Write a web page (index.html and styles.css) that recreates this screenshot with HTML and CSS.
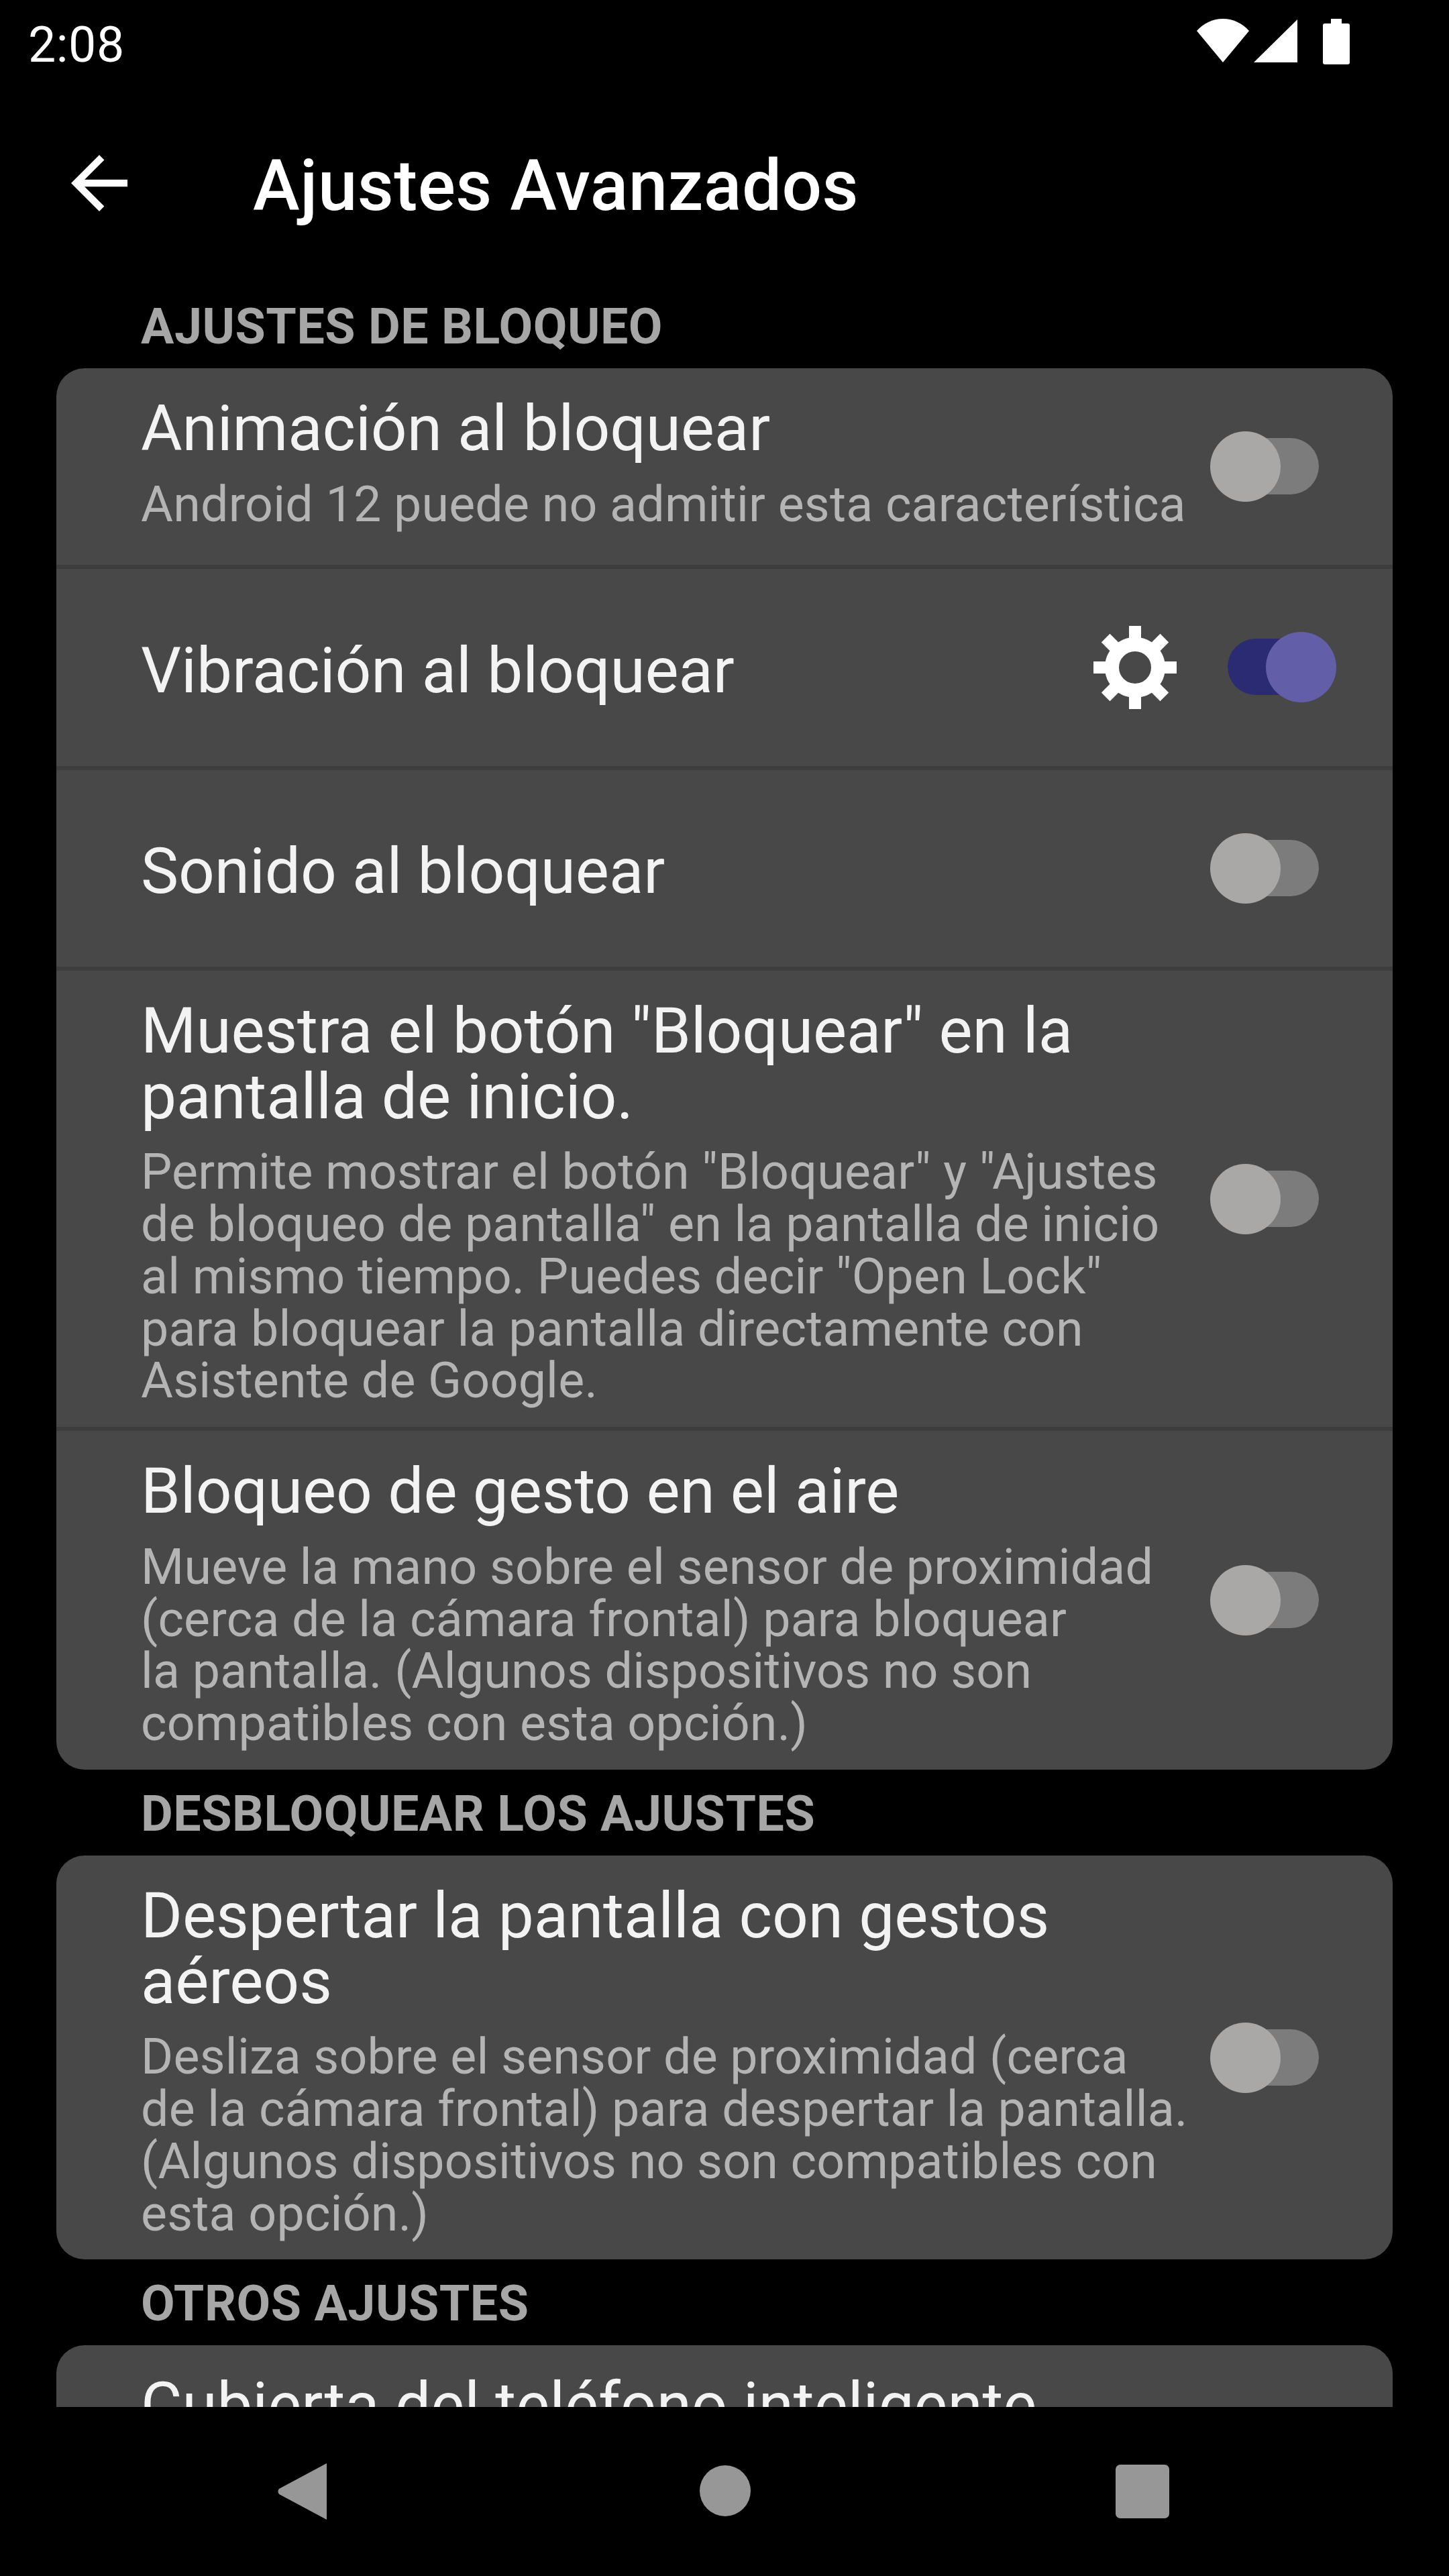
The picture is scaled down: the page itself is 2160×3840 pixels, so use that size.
FILE: index.html
```html
<!DOCTYPE html>
<html lang="es">
<head>
<meta charset="utf-8">
<title>Ajustes Avanzados</title>
<link rel="stylesheet" href="styles.css">
</head>
<body>
<div class="screen">
  <header class="status">
    <span class="time">2:08</span>
    <div class="status-icons">
      <svg class="ic-wifi" viewBox="0 0 78 65"><path d="M0 18C10 7 23 0 39 0s29 7 39 18L39 65z"/></svg>
      <svg class="ic-signal" viewBox="0 0 65 64"><path d="M65 0v64H0z"/></svg>
      <svg class="ic-batt" viewBox="0 0 40 68"><path d="M12 0h16v7h9a3 3 0 0 1 3 3v55a3 3 0 0 1-3 3H3a3 3 0 0 1-3-3V10a3 3 0 0 1 3-3h9z"/></svg>
    </div>
  </header>
  <div class="appbar">
    <svg class="back" viewBox="0 0 24 24"><path fill="#fff" d="M20 11H7.83l5.59-5.59L12 4l-8 8 8 8 1.41-1.41L7.83 13H20v-2z"/></svg>
    <h1 class="title">Ajustes Avanzados</h1>
  </div>
  <main class="scroll">
    <h2 class="section">AJUSTES DE BLOQUEO</h2>
    <section class="card">
      <div class="row row-head">
        <div class="txt"><div class="t">Animación al bloquear</div><div class="s">Android 12 puede no admitir esta característica</div></div>
        <div class="sw"><i class="track"></i><i class="thumb"></i></div>
      </div>
      <div class="row row-one">
        <div class="txt"><div class="t">Vibración al bloquear</div></div>
        <svg class="gear" viewBox="0 0 124 124">
          <circle cx="62" cy="62" r="34.5" fill="none" stroke="#fff" stroke-width="21"/>
          <g fill="#fff">
            <rect x="53" y="0" width="18" height="30"/>
            <rect x="53" y="0" width="18" height="30" transform="rotate(45 62 62)"/>
            <rect x="53" y="0" width="18" height="30" transform="rotate(90 62 62)"/>
            <rect x="53" y="0" width="18" height="30" transform="rotate(135 62 62)"/>
            <rect x="53" y="0" width="18" height="30" transform="rotate(180 62 62)"/>
            <rect x="53" y="0" width="18" height="30" transform="rotate(225 62 62)"/>
            <rect x="53" y="0" width="18" height="30" transform="rotate(270 62 62)"/>
            <rect x="53" y="0" width="18" height="30" transform="rotate(315 62 62)"/>
          </g>
        </svg>
        <div class="sw on"><i class="track"></i><i class="thumb"></i></div>
      </div>
      <div class="row row-one">
        <div class="txt"><div class="t">Sonido al bloquear</div></div>
        <div class="sw"><i class="track"></i><i class="thumb"></i></div>
      </div>
      <div class="row">
        <div class="txt"><div class="t">Muestra el botón "Bloquear" en la<br>pantalla de inicio.</div><div class="s">Permite mostrar el botón "Bloquear" y "Ajustes<br>de bloqueo de pantalla" en la pantalla de inicio<br>al mismo tiempo. Puedes decir "Open Lock"<br>para bloquear la pantalla directamente con<br>Asistente de Google.</div></div>
        <div class="sw"><i class="track"></i><i class="thumb"></i></div>
      </div>
      <div class="row">
        <div class="txt"><div class="t">Bloqueo de gesto en el aire</div><div class="s">Mueve la mano sobre el sensor de proximidad<br>(cerca de la cámara frontal) para bloquear<br>la pantalla. (Algunos dispositivos no son<br>compatibles con esta opción.)</div></div>
        <div class="sw"><i class="track"></i><i class="thumb"></i></div>
      </div>
    </section>
    <h2 class="section">DESBLOQUEAR LOS AJUSTES</h2>
    <section class="card">
      <div class="row">
        <div class="txt"><div class="t">Despertar la pantalla con gestos<br>aéreos</div><div class="s">Desliza sobre el sensor de proximidad (cerca<br>de la cámara frontal) para despertar la pantalla.<br>(Algunos dispositivos no son compatibles con<br>esta opción.)</div></div>
        <div class="sw"><i class="track"></i><i class="thumb"></i></div>
      </div>
    </section>
    <h2 class="section">OTROS AJUSTES</h2>
    <section class="card">
      <div class="row row-cut">
        <div class="txt"><div class="t">Cubierta del teléfono inteligente</div></div>
      </div>
    </section>
  </main>
  <nav class="navbar">
    <svg class="nav-back" viewBox="0 0 74 84"><path d="M74 0v84L3 46q-3-4 0-8z"/></svg>
    <svg class="nav-home" viewBox="0 0 76 76"><circle cx="38" cy="38" r="38"/></svg>
    <svg class="nav-recent" viewBox="0 0 80 80"><rect width="80" height="80" rx="7"/></svg>
  </nav>
</div>
</body>
</html>
```
FILE: styles.css
```css
* { box-sizing: border-box; }
html, body { margin: 0; padding: 0; background: #000; }
.screen {
  width: 2160px;
  height: 3840px;
  display: flex;
  flex-direction: column;
  background: #000;
  color: #fff;
  font-family: Roboto, "Liberation Sans", sans-serif;
  overflow: hidden;
}
.status {
  height: 124px;
  flex: none;
  display: flex;
  align-items: flex-start;
  justify-content: space-between;
  padding: 28px 148px 0 42px;
}
.time { font-size: 73.5px; line-height: 68px; margin-top: 5px; letter-spacing: 0.5px; }
.status-icons { display: flex; align-items: flex-start; }
.status-icons svg { fill: #fff; display: block; }
.ic-wifi { width: 78px; height: 65px; margin-right: 7px; }
.ic-signal { width: 65px; height: 64px; margin-right: 38px; margin-top: 1px; }
.ic-batt { width: 40px; height: 68px; }

.appbar {
  height: 297px;
  flex: none;
  display: flex;
  align-items: flex-start;
  padding: 86px 0 0 85px;
}
.back { width: 126px; height: 126px; margin-right: 166px; flex: none; }
.title { margin: 10px 0 0; font-size: 105px; line-height: 116px; font-weight: 500; letter-spacing: 0.45px; }

.scroll {
  flex: none;
  height: 3167px;
  overflow: hidden;
  padding: 0 84px;
}
.section {
  margin: 0;
  height: 128px;
  padding: 30px 0 0 126px;
  font-size: 73.5px;
  line-height: 72px;
  font-weight: 700;
  letter-spacing: 0.55px;
  color: #a6a6a6;
  white-space: nowrap;
}
.card {
  background: #484848;
  border-radius: 42px;
  overflow: hidden;
}
.row {
  display: flex;
  align-items: center;
  padding: 41px 110px 29px 126px;
  border-top: 6px solid #3d3d3d;
}
.row:first-child { border-top: 0; }
.row-head { height: 293px; padding-bottom: 0; }
.row-head .txt { align-self: flex-start; }
.row-head .sw { margin-top: -41px; }
.row-one { height: 299.5px; padding-top: 10px; padding-bottom: 0; }
.row-cut { height: 293px; align-items: flex-start; }
.txt { flex: 1; min-width: 0; white-space: nowrap; }
.t { font-size: 94.5px; line-height: 97.6px; color: #f3f3f3; letter-spacing: -0.1px; }
.s { font-size: 73.5px; line-height: 77.8px; color: #b4b4b4; margin-top: 26px; letter-spacing: 0.22px; }
.sw { position: relative; width: 162px; height: 105px; flex: none; }
.row:not(.row-head):not(.row-one) .sw { margin-top: -12px; }
.row-one .sw { margin-top: -10px; }
.track {
  position: absolute;
  right: 0;
  top: 10px;
  width: 140px;
  height: 84px;
  border-radius: 42px;
  background: #7c7c7c;
}
.thumb {
  position: absolute;
  left: 0;
  top: 0;
  width: 105px;
  height: 105px;
  border-radius: 50%;
  background: #a9a8a6;
}
.sw.on { margin-left: 26px; margin-right: -26px; }
.sw.on .track { background: #2b2b73; right: auto; left: 0; }
.sw.on .thumb { background: #625ea8; left: auto; right: 0; }
.gear { width: 124px; height: 124px; flex: none; margin-right: 50px; margin-top: -10px; }

.navbar {
  flex: none;
  height: 252px;
  display: flex;
  align-items: flex-start;
  padding-top: 84px;
}
.navbar svg { fill: #979797; display: block; flex: none; }
.nav-back { width: 74px; height: 84px; margin-left: 413px; }
.nav-home { width: 76px; height: 76px; margin-left: 556px; margin-top: 3px; }
.nav-recent { width: 80px; height: 80px; margin-left: 544px; margin-top: 2px; }
```
